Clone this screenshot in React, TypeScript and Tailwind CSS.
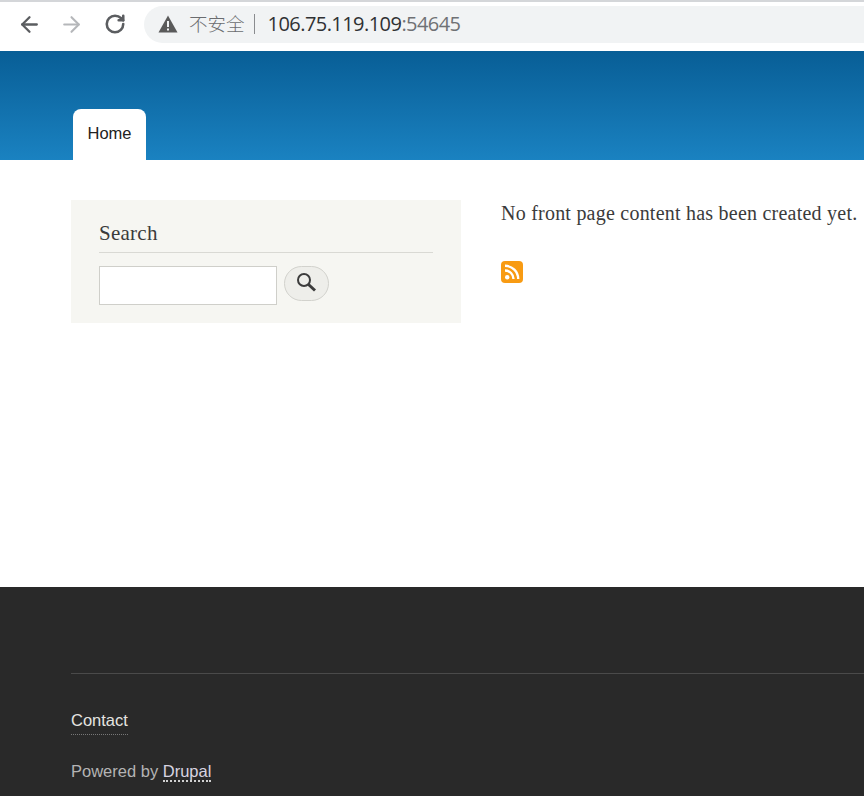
import { ArrowLeft, ArrowRight, RotateCw } from "lucide-react";

function WarningIcon() {
  return (
    <svg width="20" height="18" viewBox="0 0 20 18" className="shrink-0">
      <path d="M10 0.5 L19.5 17.5 L0.5 17.5 Z" fill="#5a5a5a" />
      <rect x="9" y="6" width="2" height="6" fill="#f1f3f4" />
      <rect x="9" y="13.5" width="2" height="2" fill="#f1f3f4" />
    </svg>
  );
}

function BrowserBar() {
  return (
    <div className="h-[51px] bg-white border-t-[2px] border-[#d4d6d9] flex items-center pl-[17px] pb-[5px] shrink-0">
      <ArrowLeft size={25} strokeWidth={2.2} className="text-[#5b5d60]" />
      <ArrowRight size={25} strokeWidth={2} className="text-[#b5b7ba] ml-[17px]" />
      <RotateCw size={22} strokeWidth={2.8} className="text-[#5b5d60] ml-[20px]" />
      <div className="ml-[18px] flex-1 h-[37px] bg-[#f1f3f4] rounded-l-full flex items-center pl-[14px] font-['Open_Sans','Noto_Sans_CJK_SC',sans-serif] text-[20px]">
        <WarningIcon />
        <span className="ml-[11px] text-[#6a6c6f] text-[18.5px] font-['Noto_Sans_CJK_SC',sans-serif] font-light">不安全</span>
        <span className="ml-[9px] w-px h-[20px] bg-[#8a8c8f]" />
        <span className="ml-[13px] text-[#2f3133] tracking-[-0.55px]">106.75.119.109</span>
        <span className="text-[#6f7174] tracking-[-0.55px]">:54645</span>
      </div>
    </div>
  );
}

function Header() {
  return (
    <header className="h-[109px] bg-gradient-to-b from-[#085e96] to-[#1a82c1] flex items-end pl-[73px] shrink-0">
      <a className="w-[73px] h-[51px] bg-white rounded-t-[8px] pt-[13px] text-center text-[16.5px] leading-[22px] text-[#222] font-['Liberation_Sans',sans-serif]">
        Home
      </a>
    </header>
  );
}

function SearchBlock() {
  return (
    <div className="w-[390px] h-[123px] bg-[#f6f6f2] px-[28px] pt-[20px] shrink-0">
      <h2 className="text-[21px] tracking-[0.25px] leading-[26px] text-[#3b3b3b] pb-[6px] border-b border-[#d9d9d4]">Search</h2>
      <div className="flex items-center mt-[13px]">
        <input className="w-[178px] h-[39px] bg-white border border-[#cfcfca]" />
        <button className="ml-[7px] -mt-[5px] w-[45px] h-[35px] rounded-full bg-[#eeeeea] border border-[#d2d2cd] flex items-center justify-center">
          <svg width="22" height="22" viewBox="0 0 22 22" fill="none" className="-mt-[2px] -ml-[2px]">
            <circle cx="9" cy="9" r="6" stroke="#3c3c3c" strokeWidth="2" />
            <path d="M13.5 13.5 L20 19.5" stroke="#3c3c3c" strokeWidth="3" />
          </svg>
        </button>
      </div>
    </div>
  );
}

function RssIcon() {
  return (
    <svg width="22" height="22" viewBox="0 0 22 22">
      <rect width="22" height="22" rx="4" fill="#f89b13" />
      <circle cx="6.2" cy="16.2" r="2.2" fill="#fff" />
      <path d="M4 9.5 A8.5 8.5 0 0 1 12.5 18" stroke="#fff" strokeWidth="2.4" fill="none" />
      <path d="M4 4.8 A13.2 13.2 0 0 1 17.2 18" stroke="#fff" strokeWidth="2.4" fill="none" />
    </svg>
  );
}

export default function App() {
  return (
    <div className="w-[864px] h-[796px] overflow-hidden flex flex-col bg-white font-['Liberation_Serif',serif]">
      <BrowserBar />
      <Header />
      <main className="flex-1 flex pl-[71px] pt-[40px]">
        <SearchBlock />
        <div className="ml-[40px] whitespace-nowrap">
          <p className="text-[20px] tracking-[0.23px] leading-[26px] text-[#3b3b3b]">No front page content has been created yet.</p>
          <div className="mt-[35px]">
            <RssIcon />
          </div>
        </div>
      </main>
      <footer className="h-[209px] bg-[#292929] pl-[71px] pt-[86px] font-['Liberation_Sans',sans-serif] text-[16.5px] shrink-0">
        <div className="h-px bg-[#4a4a4a]" />
        <div className="mt-[36px] leading-[20px]">
          <a className="text-[#e4e4e0] border-b border-dotted border-[#777] pb-[5px]">Contact</a>
        </div>
        <div className="mt-[31px] leading-[20px] text-[#b4b4b4]">
          Powered by <a className="text-[#d8d4e0] border-b-2 border-dotted border-[#d0d0d0]">Drupal</a>
        </div>
      </footer>
    </div>
  );
}
